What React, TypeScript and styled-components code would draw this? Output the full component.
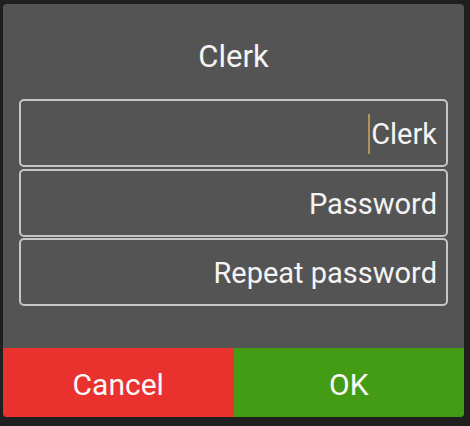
import styled, { createGlobalStyle } from "styled-components";

const GlobalStyle = createGlobalStyle`
  html, body {
    margin: 0;
    padding: 0;
    background: #1f1f1f;
    font-family: Roboto, "Noto Sans", sans-serif;
  }
`;

const fields = [
  { label: "Clerk", focused: true },
  { label: "Password", focused: false },
  { label: "Repeat password", focused: false },
];

const App = () => {
  return (
    <>
      <GlobalStyle />
      <Page>
        <Dialog>
          <Title>Clerk</Title>
          <Fields>
            {fields.map(({ label, focused }) => (
              <Field key={label}>
                {focused && <Caret />}
                <FieldText>{label}</FieldText>
              </Field>
            ))}
          </Fields>
          <Buttons>
            <ActionButton color="#e9312d">Cancel</ActionButton>
            <ActionButton color="#449c15">OK</ActionButton>
          </Buttons>
        </Dialog>
      </Page>
    </>
  );
};

export default App;

const Page = styled.div`
  width: 470px;
  height: 426px;
  padding: 4px 0 0 3px;
  box-sizing: border-box;
`;

const Dialog = styled.div`
  width: 461px;
  height: 413px;
  background: #555455;
  border-radius: 4px;
  overflow: hidden;
  display: flex;
  flex-direction: column;
`;

const Title = styled.div`
  margin-top: 35px;
  height: 36px;
  line-height: 36px;
  text-align: center;
  font-size: 31px;
  color: #f4f4f4;
`;

const Fields = styled.div`
  margin: 24px 16px 0;
  display: flex;
  flex-direction: column;
  gap: 1.5px;
`;

const Field = styled.div`
  height: 68px;
  box-sizing: border-box;
  border: 2px solid #c6c6c6;
  border-radius: 5px;
  padding: 2px 9px 0;
  display: flex;
  align-items: center;
  justify-content: flex-end;
`;

const Caret = styled.span`
  width: 2px;
  height: 40px;
  background: #b3915a;
  margin-right: 1px;
`;

const FieldText = styled.span`
  font-size: 29px;
  color: #f4f4f4;
`;

const Buttons = styled.div`
  margin-top: auto;
  height: 69px;
  display: flex;
`;

const ActionButton = styled.div<{ color: string }>`
  flex: 1;
  background: ${(p) => p.color};
  color: #f8f8f8;
  font-size: 30px;
  display: flex;
  align-items: center;
  justify-content: center;
  padding-top: 4px;
  box-sizing: border-box;
`;
